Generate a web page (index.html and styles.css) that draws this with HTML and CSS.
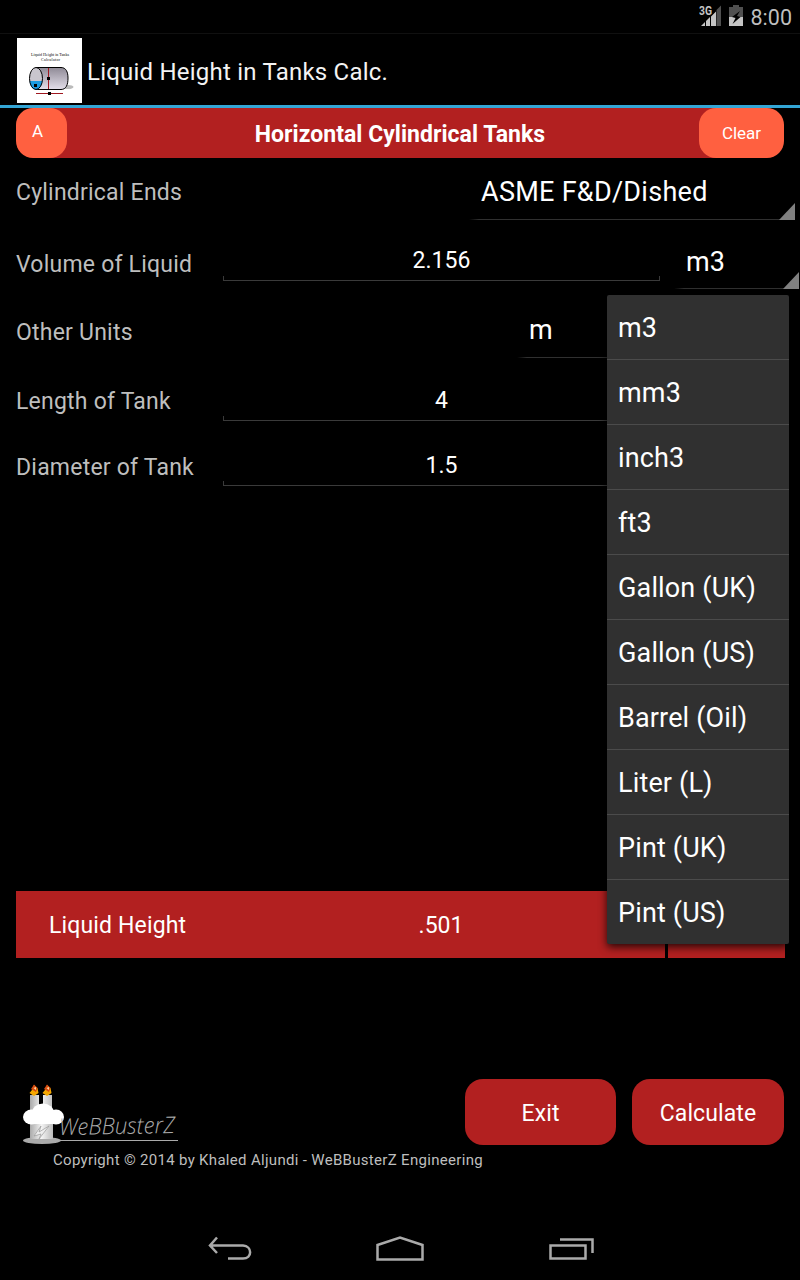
FILE: index.html
```html
<!DOCTYPE html>
<html lang="en">
<head>
  <meta charset="UTF-8">
  <title>Liquid Height in Tanks Calc.</title>
  <link rel="stylesheet" href="styles.css">
</head>
<body>
  <div class="status-bar">
    <svg class="signal" width="23" height="22" viewBox="0 0 23 22">
      <path d="M2 21 L6 17 V21Z M7 16 L11 12 V21 H7Z M12 11.500 L17 6.500 V21 H12Z" fill="#c4c4c4"/>
      <path d="M17.500 5 L22 0.500 V21 H17.500Z" fill="#505050"/>
      <text x="0" y="9.500" class="signal-text" textLength="13" lengthAdjust="spacingAndGlyphs">3G</text>
    </svg>
    <svg class="battery" width="14" height="22" viewBox="0 0 14 22">
      <path d="M4 0 H10 V2 H14 V12 H0 V2 H4Z" fill="#505050"/>
      <path d="M0 12 H14 V21 H0Z" fill="#c4c4c4"/>
      <path d="M11 6 L3 12 L6.500 13 L3.500 19 L11.500 12 L8 11Z" fill="#000"/>
    </svg>
    <span class="time">8:00</span>
  </div>

  <div class="action-bar">
    <svg class="app-icon" width="65" height="65" viewBox="0 0 65 65">
      <rect width="65" height="65" fill="#fff"/>
      <text x="14" y="17.500" class="icon-text" textLength="38">Liquid Height in Tanks</text>
      <text x="24" y="22.500" class="icon-text" textLength="19">Calculator</text>
      <defs>
        <linearGradient id="tank" x1="0" y1="0" x2="0" y2="1">
          <stop offset="0" stop-color="#8f8a96"/>
          <stop offset="1" stop-color="#e4dfea"/>
        </linearGradient>
      </defs>
      <ellipse cx="51" cy="49" rx="5.500" ry="2" fill="#bbb"/>
      <path d="M19 29.500 H44 C49 29.500 51 34 51 40 C51 47 49 51.500 44 51.500 H19Z" fill="url(#tank)" stroke="#000"/>
      <ellipse cx="19" cy="40.500" rx="6.500" ry="11" fill="#c9c6ce"/>
      <path d="M12.700 43 H25.300 C25 48 22 51.500 19 51.500 C15.500 51.500 13 48 12.700 43Z" fill="#1c9be0"/>
      <ellipse cx="19" cy="40.500" rx="6.500" ry="11" fill="none" stroke="#000"/>
      <path d="M31.500 30 V51 M19 55.500 H46" stroke="#a01820"/>
      <path d="M30 39 H33 V42 H30Z M31 54 H34 V57 H31Z M17 46 H20 V49 H17Z" fill="#000"/>
    </svg>
    <span class="app-name">Liquid Height in Tanks Calc.</span>
  </div>

  <div class="title-row">
    <button class="small-btn about">A</button>
    <h1>Horizontal Cylindrical Tanks</h1>
    <button class="small-btn">Clear</button>
  </div>

  <div class="form">
    <div class="row ends">
      <label>Cylindrical Ends</label>
      <div class="spinner">ASME F&amp;D/Dished</div>
    </div>
    <div class="row volume">
      <label>Volume of Liquid</label>
      <div class="field">2.156</div>
      <div class="spinner">m3</div>
    </div>
    <div class="row units">
      <label>Other Units</label>
      <div class="spinner">m</div>
    </div>
    <div class="row length">
      <label>Length of Tank</label>
      <div class="field">4</div>
    </div>
    <div class="row diameter">
      <label>Diameter of Tank</label>
      <div class="field">1.5</div>
    </div>
  </div>

  <div class="result">
    <span class="result-label">Liquid Height</span>
    <span class="result-value">.501</span>
    <span class="result-unit"></span>
  </div>

  <div class="footer">
    <svg class="logo" width="160" height="66" viewBox="0 0 160 66">
      <defs>
        <linearGradient id="candle">
          <stop offset="0" stop-color="#aaa"/>
          <stop offset="0.500" stop-color="#f4f4f4"/>
          <stop offset="1" stop-color="#bbb"/>
        </linearGradient>
      </defs>
      <ellipse cx="20" cy="61.500" rx="19" ry="3.500" fill="#aaa"/>
      <path d="M8 16 H17 V32 H8Z M21 16 H30 V32 H21Z M8 40 H31 V60 H8Z" fill="url(#candle)"/>
      <path d="M7.500 14 L10 11 L12 6 L15.500 9 L16.500 14 L12 17Z M20.500 14 L23 11 L25 6 L28.500 9 L29.500 14 L25 17Z" fill="#f5a800"/>
      <path d="M9 10 L12 5.500 L15.500 9 L14 13Z M22 10 L25 5.500 L28.500 9 L27 13Z" fill="#d84b10"/>
      <path d="M11.500 9 L14 8 V11Z M24.500 9 L27 8 V11Z" fill="#ffd9a0"/>
      <path d="M12 57 L19 47 L17 53 L27 47 L17 60 L19 55Z" fill="#eee" stroke="#999" stroke-width="0.700"/>
      <g fill="#fff">
        <ellipse cx="9.500" cy="38" rx="8.500" ry="7.500"/>
        <ellipse cx="21" cy="34" rx="11" ry="9.500"/>
        <ellipse cx="34" cy="38" rx="8" ry="7.500"/>
        <path d="M9 36 H35 V45 H9Z"/>
      </g>
      <path d="M38 61.500 H156" stroke="#aaa"/>
      <text x="37" y="56" class="logo-text" textLength="116" lengthAdjust="spacingAndGlyphs" transform="rotate(-1 38 56)">WeBBusterZ</text>
    </svg>
    <button class="big-btn exit">Exit</button>
    <button class="big-btn">Calculate</button>
  </div>
  <p class="copyright">Copyright © 2014 by Khaled Aljundi - WeBBusterZ Engineering</p>

  <div class="nav-bar">
    <svg width="44" height="26" viewBox="0 0 44 26">
      <path d="M9 1.500 L2 9.500 L9 17 M2 9.500 H35 C44.500 10 44.500 22.500 35 22.500 H20"/>
    </svg>
    <svg width="48" height="26" viewBox="0 0 48 26">
      <path d="M1.500 9 L24 1.500 L46.500 9 V23.500 H1.500Z"/>
    </svg>
    <svg width="46" height="26" viewBox="0 0 46 26">
      <path d="M2.500 9.500 H37.500 V22.500 H2.500Z M12 3.500 H44.500 V17"/>
    </svg>
  </div>

  <ul class="dropdown">
    <li>m3</li>
    <li>mm3</li>
    <li>inch3</li>
    <li>ft3</li>
    <li>Gallon (UK)</li>
    <li>Gallon (US)</li>
    <li>Barrel (Oil)</li>
    <li>Liter (L)</li>
    <li>Pint (UK)</li>
    <li>Pint (US)</li>
  </ul>
</body>
</html>
```

FILE: styles.css
```css
:root {
  --red: #b22020;
  --orange: #ff6040;
  --line: #3a3a3a;
}

* {
  box-sizing: border-box;
}

body {
  position: relative;
  width: 800px;
  height: 1280px;
  margin: 0;
  overflow: hidden;
  display: flex;
  flex-direction: column;
  background-color: #000;
  color: #fff;
  font-family: Roboto, sans-serif;
}

button {
  border: none;
  padding: 0;
  color: #fff;
  font-family: inherit;
}

.status-bar {
  height: 34px;
  display: flex;
  justify-content: flex-end;
  padding: 5px 8px 0 0;
  border-bottom: 1px solid #101010;
}

.signal {
  margin-right: 7px;
}

.signal-text {
  font-size: 12px;
  font-weight: bold;
  fill: #c4c4c4;
  stroke: #000;
  stroke-width: 1.5px;
  paint-order: stroke;
}

.battery {
  margin-right: 8px;
}

.time {
  font-size: 21.5px;
  line-height: 26px;
  color: #bebebe;
}

.action-bar {
  height: 74px;
  display: flex;
  align-items: flex-start;
  padding: 4px 0 0 17px;
  border-bottom: 3px solid #33a5d5;
}

.icon-text {
  font-size: 4px;
  font-family: "Liberation Serif", serif;
}

.app-name {
  margin-left: 5px;
  font-size: 24px;
  line-height: 68px;
  letter-spacing: 0.22px;
  color: #f3f3f3;
}

.title-row {
  height: 50px;
  margin: 0 16px;
  display: flex;
  justify-content: space-between;
  background: linear-gradient(to right, #000 20px, var(--red) 20px, var(--red) 748px, #000 748px);
}

.title-row h1 {
  margin: 0 0 0 34px;
  font-size: 23px;
  line-height: 53px;
  letter-spacing: 0.03px;
}

.small-btn {
  width: 85px;
  border-radius: 17px;
  background-color: var(--orange);
  font-size: 17px;
}

.about {
  width: 51px;
  padding: 0 8px 4px 0;
}

.form {
  flex: none;
  height: 733px;
}

.row {
  display: flex;
  align-items: flex-end;
  padding-left: 16px;
}

.row label {
  width: 207px;
  font-size: 23px;
  line-height: 28px;
  letter-spacing: 0.22px;
  margin-bottom: 11px;
  color: #bebebe;
}

.ends { height: 62px; }
.volume { height: 70px; }
.units { height: 68px; }
.length { height: 63px; }
.diameter { height: 65px; }

.ends label { margin-bottom: 13px; }
.length label { margin-bottom: 5px; }
.diameter label { margin-bottom: 4px; }

.field {
  width: 437px;
  height: 40px;
  font-size: 23px;
  line-height: 40px;
  text-align: center;
  background:
    linear-gradient(var(--line), var(--line)) left bottom / 1px 5px no-repeat,
    linear-gradient(var(--line), var(--line)) right bottom / 1px 5px no-repeat,
    linear-gradient(var(--line), var(--line)) left bottom / 100% 1px no-repeat;
}

.volume .field {
  margin-bottom: 9px;
}

.spinner {
  position: relative;
  height: 54px;
  padding-left: 12px;
  font-size: 27px;
  line-height: 52px;
  background: linear-gradient(to right, transparent, #303030 10px) left bottom / 100% 1px no-repeat;
}

.spinner::after {
  content: "";
  position: absolute;
  right: 0;
  bottom: 0;
  border-left: 16px solid transparent;
  border-bottom: 17px solid #808080;
}

.ends .spinner {
  width: 326px;
  margin-left: 246px;
  letter-spacing: 0.28px;
}

.volume .spinner {
  width: 125px;
  margin: 0 0 1px 14px;
  line-height: 54px;
}

.units .spinner {
  width: 262px;
  margin-left: 294px;
}

.result {
  height: 67px;
  margin: 0 15px 0 16px;
  display: grid;
  grid-template-columns: 202px 446px 4px 117px;
  line-height: 69px;
  font-size: 23px;
  background: linear-gradient(to right, var(--red) 649px, #000 649px, #000 652px, var(--red) 652px);
}

.result-label {
  padding-left: 33px;
  letter-spacing: 0.15px;
}

.result-value {
  text-align: center;
}

.footer {
  height: 66px;
  margin: 121px 16px 0 22px;
  display: flex;
  gap: 16px;
}

.logo {
  margin-right: auto;
}

/* thin handwriting look */
.logo-text {
  font-family: "Open Sans", sans-serif;
  font-size: 23px;
  font-weight: 300;
  font-style: italic;
  fill: #aaa;
}

.big-btn {
  width: 152px;
  height: 66px;
  padding-top: 2px;
  border-radius: 18px;
  background-color: var(--red);
  font-size: 23px;
  letter-spacing: 0.1px;
}

.exit {
  width: 151px;
}

.copyright {
  margin: 4px 0 0 53px;
  font-size: 15px;
  line-height: 22px;
  letter-spacing: 0.31px;
  color: #bebebe;
}

.nav-bar {
  margin-top: 65px;
  padding-left: 208px;
  display: flex;
  gap: 124px;
}

.nav-bar svg {
  fill: none;
  stroke: #aaa;
  stroke-width: 2.5;
}

.dropdown {
  position: absolute;
  top: 295px;
  left: 607px;
  width: 182px;
  margin: 0;
  padding: 0;
  list-style: none;
  background-color: #303030;
  border-radius: 2px;
  box-shadow: 0 3px 8px rgba(0,0,0,0.8);
}

.dropdown li {
  height: 65px;
  padding-left: 11px;
  font-size: 27px;
  line-height: 66px;
  letter-spacing: 0.15px;
  border-bottom: 1px solid #4b4b4b;
}

.dropdown li:last-child {
  height: 64px;
  border-bottom: none;
}
```
